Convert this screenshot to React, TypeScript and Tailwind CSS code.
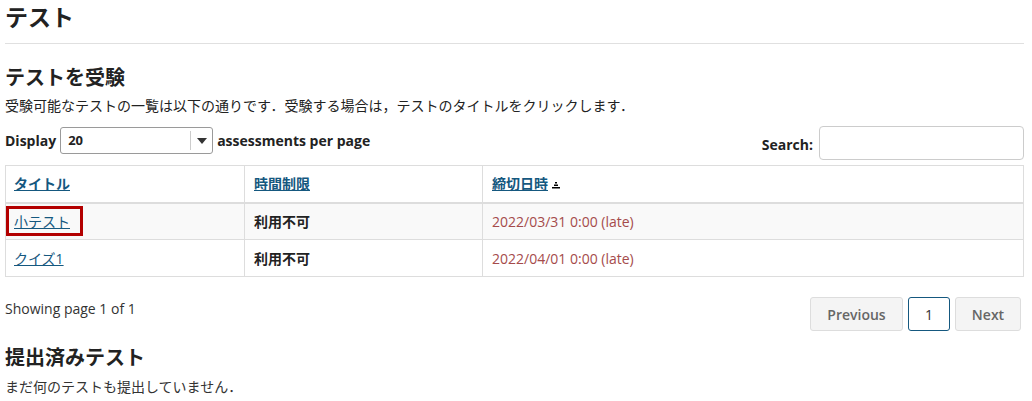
import React from 'react';

const font = { fontFamily: '"Open Sans", "Noto Sans CJK JP", sans-serif' };

function SortIcon() {
  return (
    <svg width="8" height="7" viewBox="0 0 8 7" className="inline-block ml-1 align-middle">
      <rect x="3" y="0" width="2" height="1.5" fill="#000" />
      <rect x="2" y="2.5" width="4" height="1.5" fill="#000" />
      <rect x="0" y="5" width="8" height="1.5" fill="#000" />
    </svg>
  );
}

const rows = [
  { title: '小テスト', limit: '利用不可', due: '2022/03/31 0:00 (late)', highlight: true },
  { title: 'クイズ1', limit: '利用不可', due: '2022/04/01 0:00 (late)', highlight: false },
];

export default function App() {
  return (
    <div className="px-[5px] pr-2 text-[14px] text-[#222] bg-white" style={font}>
      <h1 className="text-[23px] font-semibold leading-none pt-[6px] pb-[12px] border-b border-[#e0e0e0] h-[44px]">テスト</h1>

      <h2 className="text-[20px] font-bold mt-[20px] leading-[28px]">テストを受験</h2>
      <p className="mt-[4px] text-[14px] leading-[20px]">
        受験可能なテストの一覧は以下の通りです．受験する場合は，テストのタイトルをクリックします．
      </p>

      <div className="flex items-start justify-between mt-[10px]">
        <div className="flex items-center gap-[4px] mt-[1px] font-bold text-[14px]">
          <span>Display</span>
          <div className="flex items-center w-[153px] h-[27px] border border-[#9a9a9a] rounded-[3px] bg-white">
            <span className="flex-1 pl-[7px] text-[13px] font-bold">20</span>
            <span className="w-px h-[19px] bg-[#ccc]" />
            <span className="w-[21px] flex justify-center">
              <svg width="10" height="6" viewBox="0 0 10 6"><path d="M0 0h10L5 6z" fill="#333" /></svg>
            </span>
          </div>
          <span>assessments per page</span>
        </div>
        <div className="flex items-center gap-[6px] font-bold text-[14px]">
          <span className="mt-[2px]">Search:</span>
          <input className="w-[205px] h-[34px] border border-[#ccc] rounded-[4px] outline-none" />
        </div>
      </div>

      <table className="w-[1019px] mt-[5px] border-collapse border border-[#ddd] text-[14px]">
        <thead>
          <tr className="h-[37px] border-b-2 border-[#ddd]">
            <th className="w-[239px] text-left font-bold px-[8px] border-r border-[#ddd]">
              <a className="text-[#15587f] underline">タイトル</a>
            </th>
            <th className="w-[238px] text-left font-bold px-[9px] border-r border-[#ddd]">
              <a className="text-[#15587f] underline">時間制限</a>
            </th>
            <th className="text-left font-bold px-[9px]">
              <a className="text-[#15587f] underline">締切日時</a>
              <SortIcon />
            </th>
          </tr>
        </thead>
        <tbody>
          {rows.map((r, i) => (
            <tr key={r.title} className={`h-[37px] border-b border-[#ddd] ${i % 2 === 0 ? 'bg-[#f9f9f9]' : 'bg-white'}`}>
              <td className="px-0 border-r border-[#ddd]">
                <span
                  className={`inline-flex items-center h-[30px] pl-[5px] pr-[10px] border-[3px] ${
                    r.highlight ? 'border-[#b30000] bg-[#f9f9f9]' : 'border-transparent'
                  }`}
                >
                  <a className="text-[#15587f] underline">{r.title}</a>
                </span>
              </td>
              <td className="px-[9px] font-bold border-r border-[#ddd]">{r.limit}</td>
              <td className="px-[9px] text-[#a54b4b]">{r.due}</td>
            </tr>
          ))}
        </tbody>
      </table>

      <div className="flex items-start justify-between mt-[20px] w-[1019px]">
        <p className="mt-[2px] leading-[20px] text-[#333]">Showing page 1 of 1</p>
        <div className="flex gap-[5px] pr-[3px]">
          <button className="h-[34px] w-[93px] bg-[#f4f4f4] border border-[#ddd] rounded-[3px] text-[#666] font-semibold text-[14px]">
            Previous
          </button>
          <button className="h-[34px] w-[42px] bg-white border border-[#15587f] rounded-[3px] text-[#333] text-[14px]">
            1
          </button>
          <button className="h-[34px] w-[66px] bg-[#f4f4f4] border border-[#ddd] rounded-[3px] text-[#666] font-semibold text-[14px]">
            Next
          </button>
        </div>
      </div>

      <h2 className="text-[20px] font-bold mt-[13px] leading-[28px]">提出済みテスト</h2>
      <p className="mt-[5px] leading-[20px] text-[#333]">まだ何のテストも提出していません．</p>
    </div>
  );
}
